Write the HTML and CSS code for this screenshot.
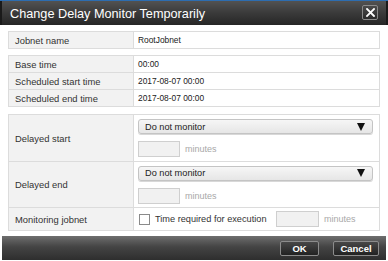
FILE: index.html
```html
<!DOCTYPE html>
<html>
<head>
<meta charset="utf-8">
<link rel="stylesheet" href="styles.css">
</head>
<body>
<div class="dialog">
  <div class="titlebar">
    <span class="title">Change Delay Monitor Temporarily</span>
    <button class="close" aria-label="Close">
      <svg width="9" height="9" viewBox="0 0 9 9"><path d="M1 1L8 8M8 1L1 8" stroke="#fff" stroke-width="1.8" stroke-linecap="square"/></svg>
    </button>
  </div>
  <div class="content">
    <table class="grid t1">
      <tr class="r17"><th>Jobnet name</th><td>RootJobnet</td></tr>
    </table>
    <table class="grid t2">
      <tr class="r17"><th>Base time</th><td>00:00</td></tr>
      <tr class="r17"><th>Scheduled start time</th><td>2017-08-07 00:00</td></tr>
      <tr class="r17"><th>Scheduled end time</th><td>2017-08-07 00:00</td></tr>
    </table>
    <table class="grid t3">
      <tr class="rstart"><th>Delayed start</th>
        <td class="stack">
          <div class="select"><span>Do not monitor</span><span class="arrow"></span></div>
          <div class="minrow"><span class="minbox"></span><span class="unit">minutes</span></div>
        </td></tr>
      <tr class="rend"><th>Delayed end</th>
        <td class="stack">
          <div class="select"><span>Do not monitor</span><span class="arrow"></span></div>
          <div class="minrow"><span class="minbox"></span><span class="unit">minutes</span></div>
        </td></tr>
      <tr class="rmon"><th>Monitoring jobnet</th>
        <td>
          <div class="monrow">
            <span class="check"></span><span class="checklabel">Time required for execution</span>
            <span class="minbox mb2"></span><span class="unit">minutes</span>
          </div>
        </td></tr>
    </table>
  </div>
  <div class="footer">
    <button class="btn ok">OK</button>
    <button class="btn cancel">Cancel</button>
  </div>
</div>
</body>
</html>
```
FILE: styles.css
```css
html, body {
  margin: 0;
  padding: 0;
  background: #fff;
}
body {
  width: 388px;
  height: 261px;
  overflow: hidden;
  font-family: "Liberation Sans", Arial, sans-serif;
  color: #333;
}
.dialog {
  width: 388px;
  height: 261px;
  display: flex;
  flex-direction: column;
  background: #fff;
}
.titlebar {
  height: 24px;
  border-top: 1px solid #2d6db0;
  background: linear-gradient(#525252, #3a3a3a 50%, #262626);
  display: flex;
  align-items: center;
  justify-content: space-between;
  padding: 0 10px 0 10px;
  box-shadow: inset 2px 0 0 #1a1a1a, inset -2px 0 0 #1a1a1a;
}
.title {
  color: #fff;
  font-size: 12.7px;
  letter-spacing: 0;
  margin-top: 1px;
}
.close {
  width: 16px;
  height: 15px;
  margin: 0 0 1px 0;
  padding: 0;
  border: 1px solid #8a8a8a;
  border-radius: 2px;
  background: linear-gradient(#4a4a4a, #2c2c2c);
  display: flex;
  align-items: center;
  justify-content: center;
}
.close svg { display: block; }
.content {
  padding: 6px 8px 0 8px;
  display: flex;
  flex-direction: column;
  gap: 6px;
}
.t3 { margin-top: 1px; }
.grid {
  width: 372px;
  border-collapse: collapse;
  table-layout: fixed;
}
.grid th, .grid td {
  border: 1px solid #dcdcdc;
  padding: 0;
  vertical-align: middle;
}
.grid th {
  width: 118px;
  background: #f2f2f2;
  font-weight: normal;
  text-align: left;
  padding-left: 6px;
  font-size: 9.4px;
  color: #333;
}
.grid td {
  padding-left: 4px;
  padding-right: 6px;
  font-size: 8.4px;
  color: #222;
}
.r17 { height: 17px; }
.rstart { height: 47px; }
.rend { height: 46px; }
.rmon { height: 23px; }
.stack > div + div { margin-top: 7px; }
.select {
  height: 13px;
  border: 1px solid #c4c4c4;
  border-radius: 3px;
  background: linear-gradient(#f6f6f6, #e6e6e6);
  display: flex;
  align-items: center;
  justify-content: space-between;
  padding: 0 7px 0 6px;
  font-size: 9.2px;
  color: #222;
  box-shadow: 0 1px 0 #d8d8d8;
}
.arrow {
  width: 0;
  height: 0;
  border-left: 4px solid transparent;
  border-right: 4px solid transparent;
  border-top: 8px solid #111;
}
.minrow, .monrow {
  display: flex;
  align-items: center;
}
.minbox {
  width: 40px;
  height: 14px;
  border: 1px solid #cfcfcf;
  background: #f1f1f1;
}
.unit {
  margin-left: 5px;
  font-size: 9px;
  color: #a8a8a8;
}
.check {
  width: 9px;
  height: 9px;
  border: 1px solid #8a8a8a;
  background: #fff;
  margin-left: 1px;
}
.checklabel {
  margin-left: 5px;
  font-size: 9.2px;
  color: #333;
  width: 121px;
}
.mb2 { width: 41px; }
.footer {
  margin: 5px 2px 0 2px;
  height: 24px;
  background: linear-gradient(#6e6e6e, #444 45%, #2e2e2e);
  display: flex;
  align-items: center;
  justify-content: flex-end;
  gap: 14px;
  padding-right: 7px;
}
.btn {
  height: 15px;
  padding: 0;
  border: 1px solid #8c8c8c;
  border-radius: 2px;
  background: linear-gradient(#474747, #222);
  color: #fff;
  font-family: "Liberation Sans", Arial, sans-serif;
  font-size: 9.5px;
  font-weight: bold;
}
.ok { width: 39px; }
.cancel { width: 46px; }
```
